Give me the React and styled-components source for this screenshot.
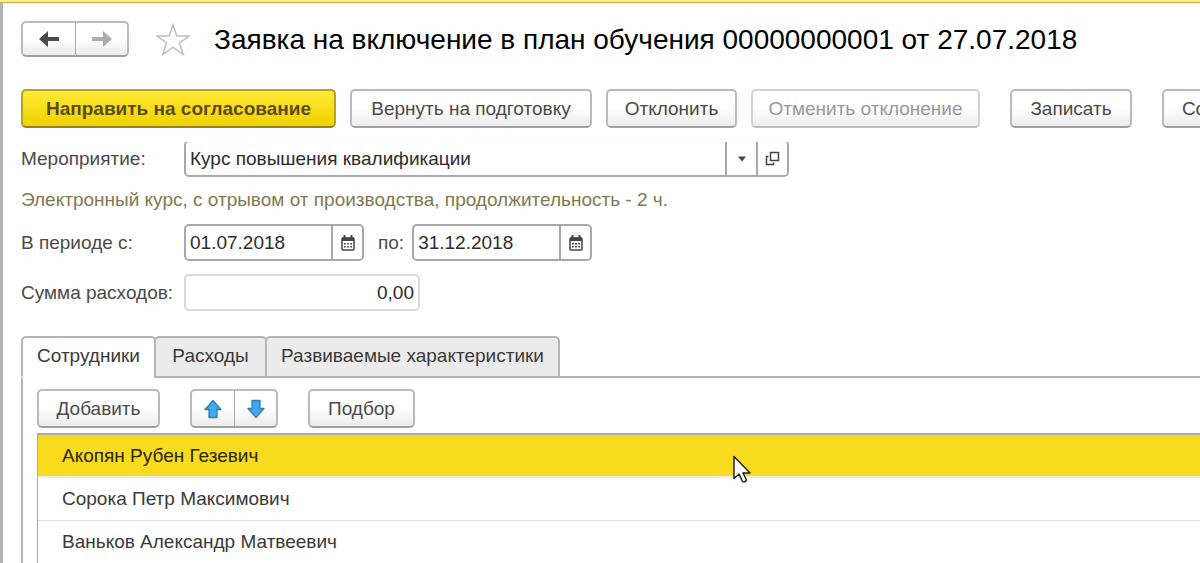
import { useState } from "react";
import styled, { createGlobalStyle, css } from "styled-components";

const GlobalStyle = createGlobalStyle`
  * {
    box-sizing: border-box;
  }

  body {
    margin: 0;
    overflow: hidden;
    background: #fefefe;
  }

  body, button, input {
    font-family: "Liberation Sans", Arial, sans-serif;
    font-size: 19px;
    line-height: 23px;
    color: #4a4a4a;
  }
`;

const Page = styled.div`
  min-height: 100vh;
`;

const TopStrip = styled.div`
  height: 3px;
  background: #f8ee8a;
  border-bottom: 1px solid #c4ac55;
`;

const Window = styled.main`
  position: relative;
  display: flex;
  flex-direction: column;
  min-height: calc(100vh - 3px);
  padding: 18px 0 0 18px;
  border-left: 3px solid #b4b4b4;
  overflow: hidden;
`;

const Header = styled.header`
  display: flex;
  align-items: center;
`;

const buttonFace = css`
  border: 2px solid #bababa;
  border-bottom-color: #a0a0a0;
  border-radius: 5px;
  background: linear-gradient(#fff 45%, #ececec);
`;

const ButtonPair = styled.div`
  ${buttonFace}
  display: flex;
  flex-shrink: 0;
`;

const PairButton = styled.button`
  display: flex;
  align-items: center;
  justify-content: center;
  width: ${(props) => (props.$wide ? "52px" : "42px")};
  height: ${(props) => (props.$wide ? "32px" : "35px")};
  padding: 0;
  border: 0;
  background: none;

  & + & {
    border-left: 1px solid #a8a8a8;
  }

  &:disabled {
    border-left-color: #d4d4d4;
  }
`;

const StarButton = styled.button`
  display: flex;
  margin: 0 24px 0 27px;
  padding: 0;
  border: 0;
  background: none;
`;

const Title = styled.h1`
  margin: 0;
  padding-top: 2px;
  font-size: 28px;
  line-height: 34px;
  font-weight: 400;
  color: #000;
  white-space: nowrap;
`;

const CommandBar = styled.div`
  display: flex;
  gap: 30px;
  margin-top: ${(props) => props.$top || "0"};
`;

const Group = styled.div`
  display: flex;
  gap: 14px;
`;

const Button = styled.button`
  ${buttonFace}
  flex-shrink: 0;
  min-width: ${(props) => props.$min || "0"};
  padding: 6px 14px;
  white-space: nowrap;

  &:disabled {
    color: #999;
    border-color: #d2d2d2;
    border-bottom-color: #bdbdbd;
  }

  ${(props) =>
    props.$primary &&
    css`
      font-weight: 700;
      color: #5c4a1c;
      border-color: #b8a21e;
      border-bottom-color: #94821c;
      background: linear-gradient(#ffe934, #f0d200);
    `}
`;

const Form = styled.form`
  display: flex;
  flex-direction: column;
  gap: 13px;
  margin-top: 14px;
  overflow: hidden;
`;

const FormRow = styled.div`
  display: flex;
  align-items: center;

  &:first-child {
    margin-top: -2px;
  }
`;

const Label = styled.label`
  flex-shrink: 0;
  width: 163px;
  white-space: nowrap;
`;

const InlineLabel = styled.label`
  margin: 0 8px 0 14px;
`;

const Hint = styled.p`
  margin: -2px 0 0;
  color: #82794f;
`;

const Field = styled.div`
  display: flex;
  width: ${(props) => props.$width};
  border: 2px solid ${(props) => (props.$muted ? "#d9d9d9" : "#a8a8a8")};
  border-radius: 5px;
  background: #fff;
  overflow: hidden;
`;

const Input = styled.input`
  flex: 1;
  min-width: 0;
  padding: 5px 4px;
  border: 0;
  outline: 0;
  color: #2c2c2c;
  background: none;
  text-align: ${(props) => props.$align || "left"};
`;

const FieldButton = styled.button`
  display: flex;
  align-items: center;
  justify-content: center;
  width: 31px;
  padding: 0;
  border: 0;
  border-left: 2px solid #a8a8a8;
  background: #fff;
`;

const TabList = styled.div`
  position: relative;
  z-index: 1;
  display: flex;
  margin-top: 25px;
`;

const Tab = styled.button`
  min-width: ${(props) => props.$min};
  padding: 6px 12px 9px;
  border: 2px solid #b5b5b5;
  border-radius: 5px 5px 0 0;
  background: #ebebeb;
  color: #3a3a3a;
  white-space: nowrap;

  & + & {
    margin-left: -2px;
  }

  &[aria-selected="true"] {
    background: #fefefe;
    border-bottom-color: #fefefe;
  }
`;

const Panel = styled.section`
  flex: 1;
  margin-top: -2px;
  padding: 11px 0 0 14px;
  border: solid #b5b5b5;
  border-width: 2px 0 0 2px;
`;

const Table = styled.table`
  width: 100%;
  margin-top: 5px;
  border: solid #ababab;
  border-width: 2px 0 0 1px;
  border-collapse: separate;
  border-spacing: 0;
`;

const Cell = styled.td`
  height: 43px;
  padding: 0 24px 1px;
  border-bottom: 1px solid #e0e0e0;
  color: #3a3a3a;

  tr[aria-selected="true"] & {
    padding-bottom: 0;
    color: #2b2608;
    border-bottom: 2px solid #eef0e6;
    background: #f8da1e;
    background-clip: padding-box;
  }
`;

const Cursor = styled.svg`
  position: absolute;
  left: 729px;
  top: 452px;
  z-index: 2;
  pointer-events: none;
`;

const employees = [
  "Акопян Рубен Гезевич",
  "Сорока Петр Максимович",
  "Ваньков Александр Матвеевич",
];

const tabs = [
  { name: "Сотрудники", width: "135px" },
  { name: "Расходы", width: "113px" },
  { name: "Развиваемые характеристики", width: "295px" },
];

function NavArrow({ color, flip }) {
  return (
    <svg width="22" height="18" viewBox="0 0 22 18">
      <path
        d={flip ? "M1 7h11V1l9 8-9 8v-6H1z" : "M21 7H10V1L1 9l9 8v-6h11z"}
        fill={color}
      />
    </svg>
  );
}

function MoveArrow({ down }) {
  return (
    <svg width="18" height="20" viewBox="0 0 18 20">
      <path
        d={down ? "M5 1.500h8v8h4L9 18.500l-8-9h4z" : "M5 18.500h8v-8h4L9 1.500l-8 9h4z"}
        fill="#3fa9ea"
        stroke="#2f7fb5"
        strokeWidth="1.300"
        strokeLinejoin="round"
      />
    </svg>
  );
}

function CalendarIcon() {
  return (
    <svg width="14" height="16" viewBox="0 0 14 16">
      <path d="M3.500 0v4M10.500 0v4" stroke="#444" strokeWidth="2" />
      <rect x="1" y="3" width="12" height="12" rx="1" fill="#fff" stroke="#444" strokeWidth="1.500" />
      <path d="M1 2.500h12V6H1z" fill="#444" />
      <path d="M3 8.700h8M3 11.700h8" stroke="#444" strokeWidth="1.600" strokeDasharray="1.700 1.450" />
    </svg>
  );
}

function DateField({ id, value, width }) {
  return (
    <Field $width={width}>
      <Input id={id} defaultValue={value} />
      <FieldButton type="button" aria-label="Календарь">
        <CalendarIcon />
      </FieldButton>
    </Field>
  );
}

function App() {
  const [activeTab, setActiveTab] = useState(tabs[0].name);
  const [selected, setSelected] = useState(0);

  return (
    <Page>
      <GlobalStyle />
      <TopStrip />
      <Window>
        <Header>
          <ButtonPair>
            <PairButton $wide aria-label="Назад">
              <NavArrow color="#4a4a4a" />
            </PairButton>
            <PairButton $wide disabled aria-label="Вперед">
              <NavArrow color="#adadad" flip />
            </PairButton>
          </ButtonPair>
          <StarButton aria-label="В избранное">
            <svg width="34" height="34" viewBox="0 0 34 34">
              <path
                d="M17 3l3.800 11H33l-9.500 7 3.700 11.500L17 25.500 6.800 32.500 10.500 21 1 14h12.200z"
                fill="#fff"
                stroke="#bdbdbd"
                strokeWidth="1.500"
              />
            </svg>
          </StarButton>
          <Title>Заявка на включение в план обучения 00000000001 от 27.07.2018</Title>
        </Header>

        <CommandBar $top="32px">
          <Group>
            <Button $primary $min="315px">Направить на согласование</Button>
            <Button $min="242px">Вернуть на подготовку</Button>
            <Button $min="131px">Отклонить</Button>
            <Button $min="229px" disabled>Отменить отклонение</Button>
          </Group>
          <Button $min="122px">Записать</Button>
          <Button $min="112px">Создать</Button>
        </CommandBar>

        <Form>
          <FormRow>
            <Label htmlFor="event">Мероприятие:</Label>
            <Field $width="605px">
              <Input id="event" defaultValue="Курс повышения квалификации" />
              <FieldButton type="button" aria-label="Выбрать">
                <svg width="10" height="6" viewBox="0 0 10 6">
                  <path d="M1 0.500h8L5 5.500z" fill="#444" />
                </svg>
              </FieldButton>
              <FieldButton type="button" aria-label="Открыть">
                <svg width="15" height="15" viewBox="0 0 15 15" fill="none" stroke="#444" strokeWidth="1.500">
                  <path d="M5.500 1.500h8v8h-8zM3.500 5.500h-2v8h7v-2" />
                </svg>
              </FieldButton>
            </Field>
          </FormRow>
          <Hint>Электронный курс, с отрывом от производства, продолжительность - 2 ч.</Hint>
          <FormRow>
            <Label htmlFor="from">В периоде с:</Label>
            <DateField id="from" value="01.07.2018" width="180px" />
            <InlineLabel htmlFor="to">по:</InlineLabel>
            <DateField id="to" value="31.12.2018" width="180px" />
          </FormRow>
          <FormRow>
            <Label htmlFor="sum">Сумма расходов:</Label>
            <Field $width="236px" $muted>
              <Input id="sum" defaultValue="0,00" $align="right" readOnly />
            </Field>
          </FormRow>
        </Form>

        <TabList role="tablist">
          {tabs.map(({ name, width }) => (
            <Tab
              key={name}
              role="tab"
              $min={width}
              aria-selected={name === activeTab}
              onClick={() => setActiveTab(name)}
            >
              {name}
            </Tab>
          ))}
        </TabList>

        <Panel>
          <CommandBar>
            <Button $min="123px">Добавить</Button>
            <ButtonPair>
              <PairButton aria-label="Переместить вверх">
                <MoveArrow />
              </PairButton>
              <PairButton aria-label="Переместить вниз">
                <MoveArrow down />
              </PairButton>
            </ButtonPair>
            <Button $min="107px">Подбор</Button>
          </CommandBar>
          <Table aria-label="Сотрудники">
            <tbody>
              {employees.map((name, i) => (
                <tr key={name} aria-selected={i === selected} onClick={() => setSelected(i)}>
                  <Cell>{name}</Cell>
                </tr>
              ))}
            </tbody>
          </Table>
        </Panel>

        <Cursor width="20" height="30" viewBox="0 0 20 30">
          <path
            d="M2 1.500v22l5-4.500 3.500 7.500q2 1.500 4-1.500L11 18h7z"
            fill="#fff"
            stroke="#222"
            strokeWidth="1.500"
            strokeLinejoin="round"
          />
        </Cursor>
      </Window>
    </Page>
  );
}

export default App;
